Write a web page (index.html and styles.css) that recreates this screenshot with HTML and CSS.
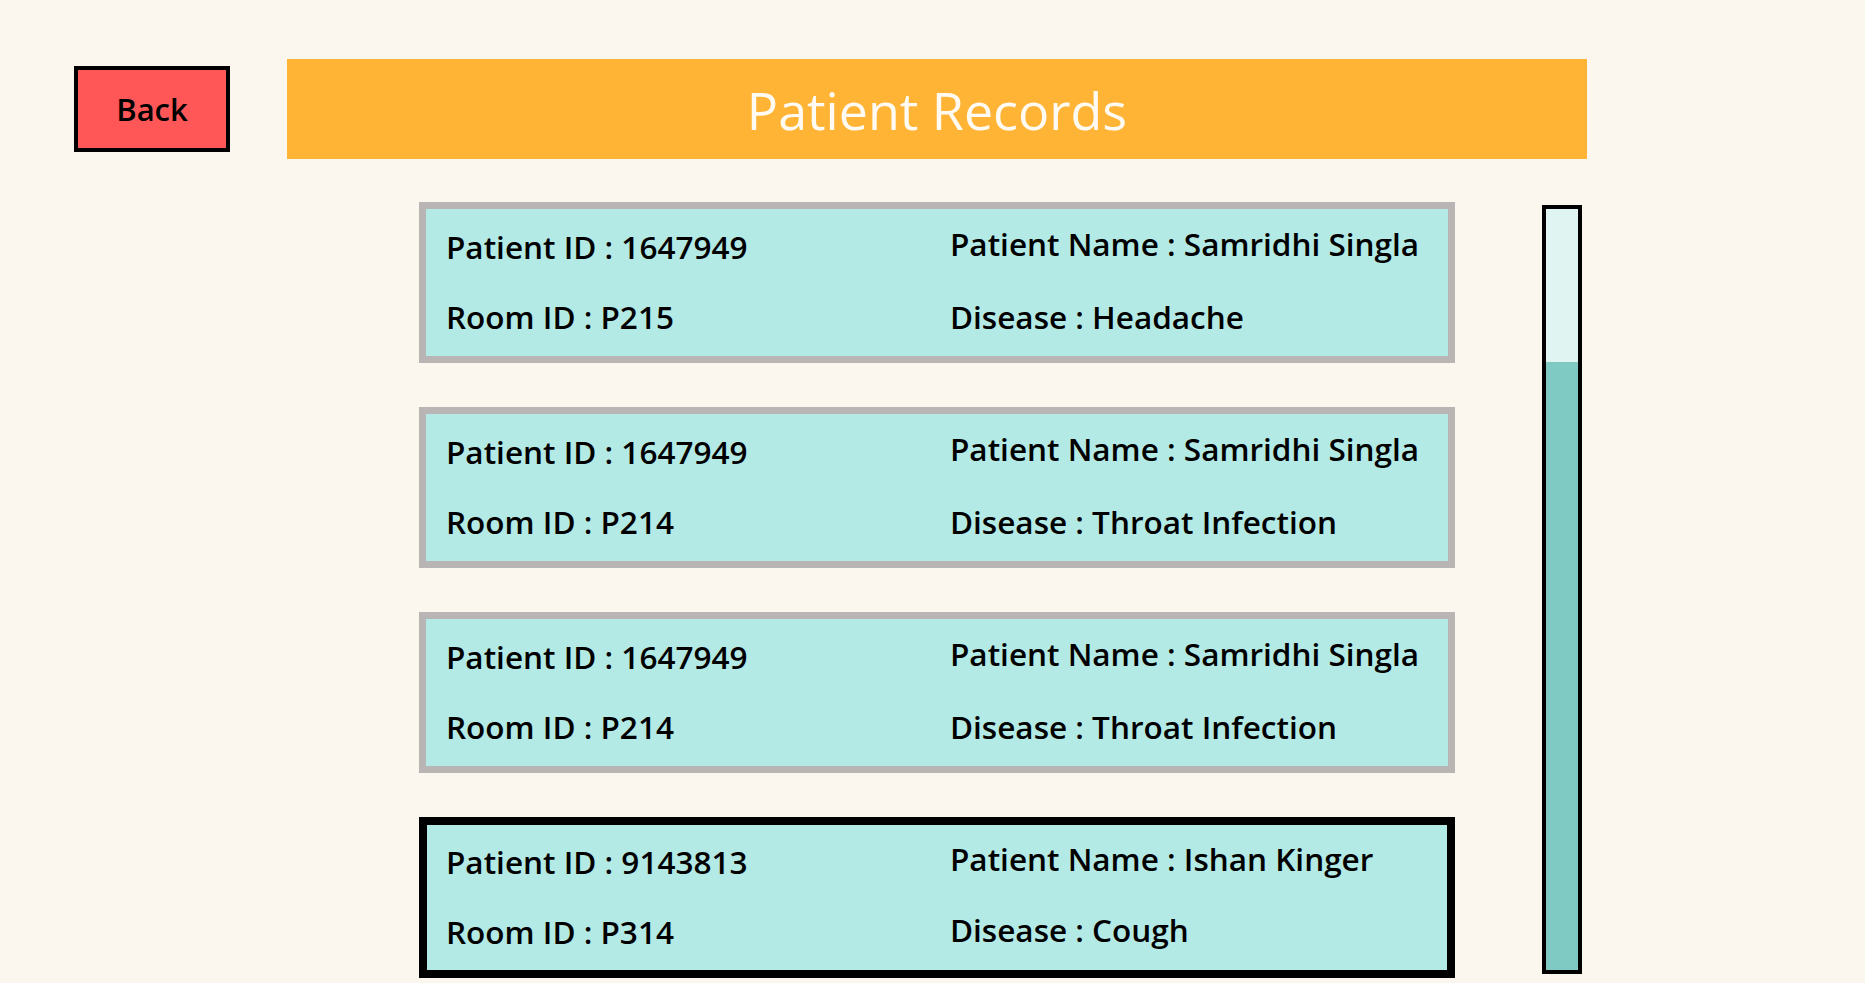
FILE: index.html
```html
<!DOCTYPE html>
<html>
<head>
<meta charset="utf-8">
<link rel="stylesheet" href="styles.css">
</head>
<body>
<div class="page">
  <div class="top">
    <button class="back">Back</button>
    <div class="header">Patient Records</div>
  </div>
  <div class="content">
    <div class="list">
      <div class="card">
        <div class="cell">Patient ID : 1647949</div>
        <div class="cell up">Patient Name : Samridhi Singla</div>
        <div class="cell">Room ID : P215</div>
        <div class="cell">Disease : Headache</div>
      </div>
      <div class="card">
        <div class="cell">Patient ID : 1647949</div>
        <div class="cell up">Patient Name : Samridhi Singla</div>
        <div class="cell">Room ID : P214</div>
        <div class="cell">Disease : Throat Infection</div>
      </div>
      <div class="card">
        <div class="cell">Patient ID : 1647949</div>
        <div class="cell up">Patient Name : Samridhi Singla</div>
        <div class="cell">Room ID : P214</div>
        <div class="cell">Disease : Throat Infection</div>
      </div>
      <div class="card selected">
        <div class="cell">Patient ID : 9143813</div>
        <div class="cell up">Patient Name : Ishan Kinger</div>
        <div class="cell">Room ID : P314</div>
        <div class="cell up2">Disease : Cough</div>
      </div>
    </div>
    <div class="scrollbar">
      <div class="track"></div>
      <div class="thumb"></div>
    </div>
  </div>
</div>
</body>
</html>
```
FILE: styles.css
```css
html, body {
  margin: 0;
  padding: 0;
  background: #fbf7ef;
  overflow: hidden;
}
.page {
  width: 1865px;
  height: 983px;
  font-family: "Open Sans", "Noto Sans", sans-serif;
  color: #000;
}
.top {
  display: flex;
  align-items: center;
  padding-top: 59px;
  padding-left: 74px;
}
.back {
  box-sizing: border-box;
  width: 156px;
  height: 86px;
  background: #ff5757;
  border: 4px solid #000;
  font-family: "Open Sans", "Noto Sans", sans-serif;
  font-size: 31px;
  font-weight: 600;
  color: #000;
  padding: 0;
  margin: 0;
}
.header {
  margin-left: 57px;
  width: 1300px;
  height: 100px;
  background: #ffb436;
  color: #fffaf2;
  font-size: 52px;
  display: flex;
  align-items: center;
  justify-content: center;
}
.content {
  display: flex;
  align-items: flex-start;
  padding-top: 43px;
  padding-left: 419px;
}
.list {
  display: flex;
  flex-direction: column;
  gap: 44px;
  width: 1036px;
}
.card {
  box-sizing: border-box;
  height: 161px;
  background: #b3eae5;
  border: 7px solid #b9b5b4;
  display: grid;
  grid-template-columns: 504px 1fr;
  grid-template-rows: 40px 40px;
  row-gap: 30px;
  padding: 18px 0 0 20px;
  font-size: 31.5px;
  font-weight: 600;
  line-height: 40px;
}
.card.selected {
  border: 8px solid #000;
  padding: 17px 0 0 19px;
}
.cell {
  white-space: nowrap;
}
.up {
  margin-top: -3px;
}
.up2 {
  margin-top: -2px;
}
.scrollbar {
  box-sizing: border-box;
  margin-left: 87px;
  margin-top: 3px;
  width: 40px;
  height: 769px;
  border: 4px solid #000;
  display: flex;
  flex-direction: column;
}
.track {
  height: 153px;
  background: #e0f4f1;
}
.thumb {
  flex: 1;
  background: #7fcac3;
}
```
